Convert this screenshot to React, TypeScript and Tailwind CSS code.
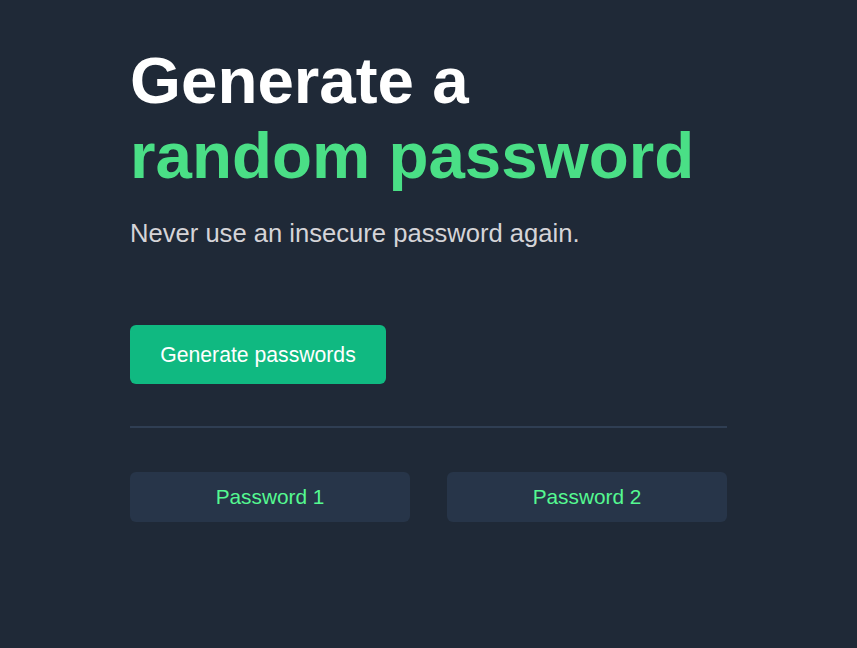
export default function App() {
  const passwords = ["Password 1", "Password 2"];

  return (
    <main className="min-h-screen bg-[#1f2937] font-['Liberation_Sans',Arial,sans-serif]">
      <section className="mx-auto w-[597px] pt-[43px]">
        <h1 className="text-[65.5px] font-bold leading-[75px] text-white">
          Generate a
          <br />
          <span className="text-[#4adf86]">random password</span>
        </h1>

        <p className="mt-[25px] text-[25.6px] leading-[30px] text-[#d5d4d8]">
          Never use an insecure password again.
        </p>

        <button className="mt-[77px] flex h-[59px] w-[256px] items-center justify-center rounded-md bg-[#10b981] text-[21.2px] text-white">
          Generate passwords
        </button>

        <div className="mt-[42px] h-[2px] bg-[#2f3e53]" />

        <div className="mt-[44px] grid grid-cols-2 gap-[37px]">
          {passwords.map((p) => (
            <div
              key={p}
              className="flex h-[50px] items-center justify-center rounded-md bg-[#273549] text-[20.8px] text-[#55f991]"
            >
              {p}
            </div>
          ))}
        </div>
      </section>
    </main>
  );
}
